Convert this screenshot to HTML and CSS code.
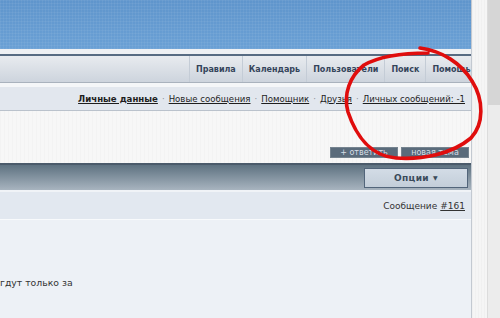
FILE: index.html
```html
<!DOCTYPE html>
<html lang="ru">
<head>
<meta charset="utf-8">
<title>Форум</title>
<link rel="stylesheet" href="styles.css">
</head>
<body>
<div class="page">
  <div class="main">
    <header class="banner"></header>
    <div class="strip"></div>
    <nav class="navbar">
      <ul class="navlist">
        <li class="navitem">Правила</li>
        <li class="navitem">Календарь</li>
        <li class="navitem">Пользователи</li>
        <li class="navitem">Поиск</li>
        <li class="navitem">Помощь</li>
      </ul>
    </nav>
    <div class="gap"></div>
    <div class="userlinks">
      <a class="ulink strong" href="#">Личные данные</a><span class="dot">·</span>
      <a class="ulink" href="#">Новые сообщения</a><span class="dot">·</span>
      <a class="ulink" href="#">Помощник</a><span class="dot">·</span>
      <a class="ulink" href="#">Друзья</a><span class="dot">·</span>
      <a class="ulink" href="#">Личных сообщений: -1</a>
    </div>
    <div class="actions">
      <span class="btn">+ ответить</span>
      <span class="btn">новая тема</span>
    </div>
    <div class="thead">
      <span class="opts">Опции <span class="caret">▼</span></span>
    </div>
    <div class="posthead">Сообщение <a class="postnum" href="#">#161</a></div>
    <div class="postbody">
      <p class="posttext">гдут только за</p>
    </div>
  </div>
  <div class="side"></div>
  <div class="scrollbar"><div class="thumb"></div></div>
</div>
<svg class="annot" width="500" height="318" viewBox="0 0 500 318">
  <path d="M420 48 C442 51 461 63 472 81 C484 100 484 124 471 138 C452 154 422 160 396 158 C371 156 356 136 348 112 C343 94 350 76 364 65 C380 56 404 53 428 53" fill="none" stroke="#e00d0d" stroke-width="3.6" stroke-linecap="round"/>
</svg>
</body>
</html>
```
FILE: styles.css
```css
html, body {
  margin: 0;
  padding: 0;
}
body {
  width: 500px;
  height: 318px;
  overflow: hidden;
  position: relative;
  font-family: "DejaVu Sans", Verdana, sans-serif;
  background: #f3f3f3;
}
.page {
  display: flex;
  height: 318px;
}
.main {
  width: 471px;
  display: flex;
  flex-direction: column;
  border-right: 1px solid #c3c9d1;
  background: #f6f6f6;
}
.banner {
  height: 49px;
  background:
    repeating-linear-gradient(90deg, rgba(255,255,255,0.05) 0 1px, transparent 1px 3px),
    repeating-linear-gradient(0deg, rgba(255,255,255,0.05) 0 1px, transparent 1px 3px),
    linear-gradient(#5f95cc, #6aa0d5);
}
.strip {
  height: 5px;
  background: #eef0f3;
  border-bottom: 2px solid #576b82;
}
.navbar {
  height: 26px;
  background: linear-gradient(#e8ebef, #cdd4dd);
  border-bottom: 1px solid #a9b2bd;
  overflow: hidden;
}
.navlist {
  list-style: none;
  margin: 0;
  padding: 0 0 0 189px;
  display: flex;
  height: 100%;
  white-space: nowrap;
}
.navitem {
  display: flex;
  align-items: center;
  padding: 0 6px;
  border-left: 1px solid #c4ccd6;
  font-size: 8px;
  font-weight: bold;
  color: #34445a;
}
.gap {
  height: 4px;
  background: #f4f6f8;
}
.userlinks {
  height: 23px;
  background: #e2e7ee;
  border-bottom: 1px solid #bac2cc;
  display: flex;
  align-items: center;
  justify-content: flex-end;
  padding-right: 6px;
  font-size: 8.6px;
  color: #1e1e1e;
}
.ulink {
  color: #1e1e1e;
  text-decoration: underline;
}
.ulink.strong {
  font-weight: bold;
}
.dot {
  color: #8a8f96;
  padding: 0 4px;
}
.actions {
  height: 52px;
  background:
    repeating-linear-gradient(90deg, rgba(0,0,0,0.015) 0 1px, transparent 1px 4px),
    #f7f7f7;
  display: flex;
  justify-content: flex-end;
  align-items: flex-end;
  gap: 3px;
  padding: 0 2px 5px 0;
  box-sizing: border-box;
}
.btn {
  height: 11px;
  width: 68px;
  background: #5a6b7b;
  border: 1px solid #75838f;
  box-sizing: border-box;
  color: #d7dee6;
  font-size: 8px;
  line-height: 9px;
  text-align: center;
}
.thead {
  height: 29px;
  box-sizing: border-box;
  border-top: 2px solid #4b5b6b;
  border-bottom: 2px solid #f0f3f7;
  background: linear-gradient(#5e7281, #a8b4bf);
  display: flex;
  justify-content: flex-end;
  align-items: center;
  padding-right: 3px;
}
.opts {
  width: 104px;
  height: 20px;
  box-sizing: border-box;
  border: 1px solid #52657a;
  background: linear-gradient(#d3dce6, #c3ced9);
  display: flex;
  align-items: center;
  justify-content: center;
  font-size: 9px;
  font-weight: bold;
  letter-spacing: 0.4px;
  color: #3a4a5a;
  gap: 4px;
}
.caret {
  font-size: 6px;
}
.posthead {
  height: 27px;
  background: #e2e8f0;
  border-bottom: 1px solid #f8fafc;
  display: flex;
  align-items: center;
  justify-content: flex-end;
  padding-right: 6px;
  font-size: 9px;
  color: #333;
}
.postnum {
  color: #333;
  margin-left: 3px;
  text-decoration: underline;
}
.postbody {
  flex: 1;
  background: #edf1f6;
}
.posttext {
  margin: 57px 0 0 0;
  font-size: 9.3px;
  color: #333;
}
.side {
  width: 15px;
  background:
    repeating-linear-gradient(90deg, rgba(0,0,0,0.02) 0 1px, transparent 1px 3px),
    #f5f5f5;
}
.scrollbar {
  width: 13px;
  background: #ececec;
  border-left: 1px solid #dcdcdc;
  box-sizing: border-box;
}
.thumb {
  height: 105px;
  background: #d6d6d6;
}
.annot {
  position: absolute;
  left: 0;
  top: 0;
  pointer-events: none;
}
```
